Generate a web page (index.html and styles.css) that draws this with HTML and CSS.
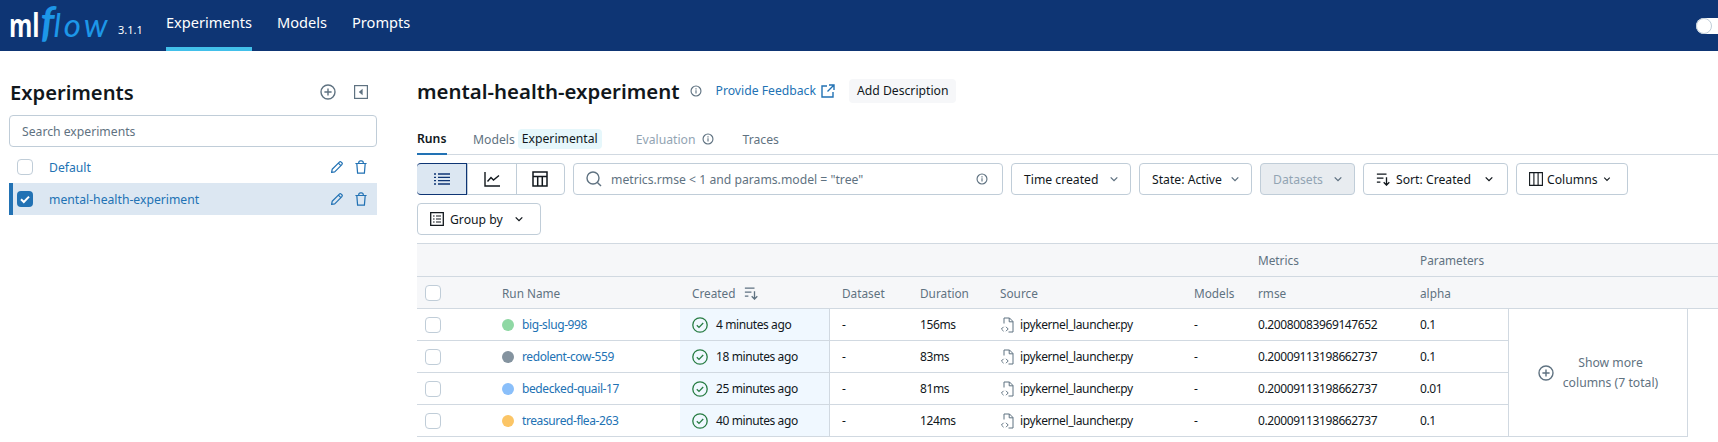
FILE: index.html
```html
<!DOCTYPE html>
<html lang="en">
<head>
    <meta charset="UTF-8">
    <meta name="viewport" content="width=device-width, initial-scale=1.0">
    <title>MLflow Experiments</title>
    <link rel="stylesheet" href="styles.css">
</head>
<body>

<svg class="defs" width="0" height="0">
    <symbol id="i-info" viewBox="0 0 16 16"><circle cx="8" cy="8" r="6.6" fill="none" stroke="currentColor" stroke-width="1.5"/><path d="M8 7v4.4M8 4.4v1.5" fill="none" stroke="currentColor" stroke-width="1.5"/></symbol>
    <symbol id="i-plus" viewBox="0 0 16 16"><circle cx="8" cy="8" r="7" fill="none" stroke="currentColor" stroke-width="1.4"/><path d="M8 4.4v7.2M4.4 8h7.2" fill="none" stroke="currentColor" stroke-width="1.4"/></symbol>
    <symbol id="i-edit" viewBox="0 0 16 16"><path d="M1.8 14.2l.7-3.6 8.2-8.2a1.5 1.5 0 0 1 2.1 0l.8.8a1.5 1.5 0 0 1 0 2.1l-8.2 8.2zM9.6 3.6l2.8 2.8" fill="none" stroke="currentColor" stroke-width="1.4" stroke-linejoin="round"/></symbol>
    <symbol id="i-trash" viewBox="0 0 16 16"><path d="M1.6 4h12.8M5.4 4V3.2A2.2 2.2 0 0 1 7.6 1h.8a2.2 2.2 0 0 1 2.2 2.2V4M3.2 4l.9 11h7.8l.9-11" fill="none" stroke="currentColor" stroke-width="1.4"/></symbol>
    <symbol id="i-chevron" viewBox="0 0 16 16"><path d="M3.6 5.8L8 10.2l4.4-4.4" fill="none" stroke="currentColor" stroke-width="1.7"/></symbol>
    <symbol id="i-sort" viewBox="0 0 16 16"><path d="M1 2.5h11M1 7h7.5M1 11.5h4M12 6v9M8.8 11.8L12 15l3.2-3.2" fill="none" stroke="currentColor" stroke-width="1.5"/></symbol>
    <symbol id="i-done" viewBox="0 0 16 16"><circle cx="8" cy="8" r="7.2" fill="none" stroke="currentColor" stroke-width="1.3"/><path d="M4.8 8.2l2.2 2.2 4.2-4.4" fill="none" stroke="currentColor" stroke-width="1.3"/></symbol>
    <symbol id="i-file" viewBox="0 0 14 16"><path d="M4 6.5V1h5.5L13 4.5V15H8.5M9.2 1v3.8H13" fill="none" stroke="currentColor" stroke-width="1"/><path d="M3.6 9.8L1.4 12l2.2 2.2M6 9.8L8.2 12 6 14.2" fill="none" stroke="currentColor" stroke-width="1"/></symbol>
</svg>

<header class="topbar">
    <div class="logo"><span class="logo-ml">ml</span><span class="logo-f">f</span><span class="logo-low">low</span></div>
    <span class="version">3.1.1</span>
    <nav class="topnav">
        <a class="topnav-item topnav-active">Experiments</a>
        <a class="topnav-item">Models</a>
        <a class="topnav-item">Prompts</a>
    </nav>
    <span class="toggle"><span class="toggle-knob"></span></span>
</header>

<div class="page">
    <aside class="sidebar">
        <div class="sidebar-head">
            <h2 class="sidebar-title">Experiments</h2>
            <svg class="icon-16 grey"><use href="#i-plus"/></svg>
            <svg class="collapse" viewBox="0 0 14 14"><rect x="0.6" y="0.6" width="12.8" height="12.8" fill="none" stroke="currentColor" stroke-width="1.2"/><path d="M8.6 3.8v6.4L4.8 7z" fill="currentColor"/></svg>
        </div>
        <div class="sidebar-search">Search experiments</div>
        <div class="exp-row">
            <span class="check"></span>
            <a class="exp-name">Default</a>
            <svg class="icon-14 blue"><use href="#i-edit"/></svg>
            <svg class="icon-14 blue"><use href="#i-trash"/></svg>
        </div>
        <div class="exp-row exp-row-active">
            <span class="check check-on"><svg viewBox="0 0 16 16"><path d="M4 8.2l2.8 2.8L12 5.6" fill="none" stroke="#fff" stroke-width="2"/></svg></span>
            <a class="exp-name">mental-health-experiment</a>
            <svg class="icon-14 blue"><use href="#i-edit"/></svg>
            <svg class="icon-14 blue"><use href="#i-trash"/></svg>
        </div>
    </aside>

    <main class="content">
        <div class="title-row">
            <h1 class="title">mental-health-experiment</h1>
            <svg class="icon-12 grey title-info"><use href="#i-info"/></svg>
            <a class="feedback">Provide Feedback</a>
            <svg class="feedback-icon" viewBox="0 0 14 14"><path d="M6 2H1v11h11V8M8 1h5v5M13 1L6.5 7.5" fill="none" stroke="currentColor" stroke-width="1.4"/></svg>
            <button class="add-desc">Add Description</button>
        </div>

        <div class="tabs">
            <span class="tab tab-active">Runs</span>
            <span class="tab tab-models">Models</span>
            <span class="tag">Experimental</span>
            <span class="tab tab-disabled">Evaluation</span>
            <svg class="icon-12 grey tab-info"><use href="#i-info"/></svg>
            <span class="tab tab-traces">Traces</span>
        </div>

        <div class="toolbar">
            <div class="segments">
                <span class="segment segment-on">
                    <svg class="icon-16 navy" viewBox="0 0 16 16"><path d="M4 3h12M4 6.3h12M4 9.6h12M4 13h12M0 3h2M0 6.3h2M0 9.6h2M0 13h2" fill="none" stroke="currentColor" stroke-width="1.3"/></svg>
                </span>
                <span class="segment">
                    <svg class="icon-16" viewBox="0 0 16 16"><path d="M1 1v14h15M3.5 10.5L7 6.5l2.5 2.5L15 4.5" fill="none" stroke="currentColor" stroke-width="1.4"/></svg>
                </span>
                <span class="segment">
                    <svg class="icon-16" viewBox="0 0 16 16"><path d="M1 1h14v14H1zM1 5.5h14M5.7 5.5V15M10.3 5.5V15" fill="none" stroke="currentColor" stroke-width="1.5"/></svg>
                </span>
            </div>
            <div class="run-search">
                <svg class="icon-16 grey" viewBox="0 0 16 16"><circle cx="7" cy="7" r="6" fill="none" stroke="currentColor" stroke-width="1.4"/><path d="M11.4 11.4L15 15" fill="none" stroke="currentColor" stroke-width="1.4"/></svg>
                <span class="run-search-text">metrics.rmse &lt; 1 and params.model = "tree"</span>
                <svg class="icon-12 grey"><use href="#i-info"/></svg>
            </div>
            <button class="btn btn-time">Time created <svg class="icon-12 grey"><use href="#i-chevron"/></svg></button>
            <button class="btn btn-state">State: Active <svg class="icon-12 grey"><use href="#i-chevron"/></svg></button>
            <button class="btn btn-datasets" disabled>Datasets <svg class="icon-12 grey"><use href="#i-chevron"/></svg></button>
            <button class="btn btn-sort"><svg class="icon-14"><use href="#i-sort"/></svg> Sort: Created <svg class="icon-12 sort-chevron"><use href="#i-chevron"/></svg></button>
            <button class="btn btn-columns"><svg class="icon-14" viewBox="0 0 14 14"><path d="M.6.6h12.8v12.8H.6zM4.9.6v12.8M9.1.6v12.8" fill="none" stroke="currentColor" stroke-width="1.1"/></svg> Columns <svg class="icon-10"><use href="#i-chevron"/></svg></button>
            <button class="btn btn-group"><svg class="icon-14" viewBox="0 0 14 14"><path d="M.7.7h12.6v12.6H.7z" fill="none" stroke="currentColor" stroke-width="1.3"/><path d="M3 4h1.6M6 4h5M3 7h1.6M6 7h5M3 10h1.6M6 10h5" fill="none" stroke="currentColor" stroke-width="1.2"/></svg> Group by <svg class="icon-12 group-chevron"><use href="#i-chevron"/></svg></button>
        </div>

        <div class="runs">
            <div class="th th-top"></div><div class="th th-top"></div><div class="th th-top"></div><div class="th th-top"></div><div class="th th-top"></div><div class="th th-top"></div><div class="th th-top"></div>
            <div class="th th-top">Metrics</div><div class="th th-top">Parameters</div><div class="th th-top"></div><div class="th th-top"></div>

            <div class="th"><span class="check"></span></div>
            <div class="th">Run Name</div>
            <div class="th">Created <svg class="icon-14 sort-mark"><use href="#i-sort"/></svg></div>
            <div class="th">Dataset</div>
            <div class="th">Duration</div>
            <div class="th">Source</div>
            <div class="th">Models</div>
            <div class="th">rmse</div>
            <div class="th">alpha</div>
            <div class="th"></div>
            <div class="th"></div>

            <div class="td"><span class="check"></span></div>
            <div class="td"><span class="dot dot-green"></span><a class="run-link">big-slug-998</a></div>
            <div class="td td-created"><svg class="icon-16 green"><use href="#i-done"/></svg>4 minutes ago</div>
            <div class="td">-</div>
            <div class="td">156ms</div>
            <div class="td"><svg class="file-icon"><use href="#i-file"/></svg>ipykernel_launcher.py</div>
            <div class="td">-</div>
            <div class="td">0.20080083969147652</div>
            <div class="td">0.1</div>
            <div class="show-more">
                <svg class="icon-16 grey"><use href="#i-plus"/></svg>
                <span class="show-more-text">Show more<br>columns (7 total)</span>
            </div>
            <div class="filler"></div>

            <div class="td"><span class="check"></span></div>
            <div class="td"><span class="dot dot-grey"></span><a class="run-link">redolent-cow-559</a></div>
            <div class="td td-created"><svg class="icon-16 green"><use href="#i-done"/></svg>18 minutes ago</div>
            <div class="td">-</div>
            <div class="td">83ms</div>
            <div class="td"><svg class="file-icon"><use href="#i-file"/></svg>ipykernel_launcher.py</div>
            <div class="td">-</div>
            <div class="td">0.20009113198662737</div>
            <div class="td">0.1</div>

            <div class="td"><span class="check"></span></div>
            <div class="td"><span class="dot dot-blue"></span><a class="run-link">bedecked-quail-17</a></div>
            <div class="td td-created"><svg class="icon-16 green"><use href="#i-done"/></svg>25 minutes ago</div>
            <div class="td">-</div>
            <div class="td">81ms</div>
            <div class="td"><svg class="file-icon"><use href="#i-file"/></svg>ipykernel_launcher.py</div>
            <div class="td">-</div>
            <div class="td">0.20009113198662737</div>
            <div class="td">0.01</div>

            <div class="td"><span class="check"></span></div>
            <div class="td"><span class="dot dot-yellow"></span><a class="run-link">treasured-flea-263</a></div>
            <div class="td td-created"><svg class="icon-16 green"><use href="#i-done"/></svg>40 minutes ago</div>
            <div class="td">-</div>
            <div class="td">124ms</div>
            <div class="td"><svg class="file-icon"><use href="#i-file"/></svg>ipykernel_launcher.py</div>
            <div class="td">-</div>
            <div class="td">0.20009113198662737</div>
            <div class="td">0.1</div>
        </div>
    </main>
</div>

</body>
</html>
```

FILE: styles.css
```css
* {
    box-sizing: border-box;
}
html, body {
    height: 442px;
    overflow: hidden;
}
body {
    margin: 0;
    font-family: "Noto Sans", Arial, sans-serif;
    font-size: 12.2px;
    color: #11171c;
    background-color: #fff;
}
h1, h2 {
    margin: 0;
}
button {
    font: inherit;
    color: inherit;
}
svg {
    flex: none;
}
.defs {
    position: absolute;
}

/* icon sizes and tints */
.icon-10 { width: 10px; height: 10px; }
.icon-12 { width: 12px; height: 12px; }
.icon-14 { width: 14px; height: 14px; }
.icon-16 { width: 16px; height: 16px; }
.grey { color: #5f7281; }
.blue { color: #2272b4; }
.navy { color: #0e3574; }
.green { color: #277c43; }

/* top bar */
.topbar {
    display: flex;
    align-items: stretch;
    height: 51px;
    padding-left: 9px;
    background-color: #0e3574;
    color: #fff;
}
.logo {
    display: flex;
    align-items: baseline;
    width: 109px;
    height: 51px;
    line-height: 42px;
    white-space: nowrap;
}
.logo-ml {
    margin-right: -11px;
    font-family: "Open Sans", sans-serif;
    font-size: 33px;
    font-weight: 700;
    transform: scaleX(0.72);
    transform-origin: left;
}
.logo-f, .logo-low {
    font-family: "Lato", sans-serif;
    font-style: italic;
    color: #1d97e8;
}
.logo-f {
    margin: 0 -8px;
    padding: 0 8px;
    font-size: 42px;
    font-weight: 700;
}
.logo-low {
    font-size: 33px;
    letter-spacing: 3px;
    margin-left: -1px;
}
.version {
    align-self: center;
    width: 48px;
    padding-top: 8px;
    font-size: 11px;
}
.topnav {
    display: flex;
    gap: 25px;
}
.topnav-item {
    display: flex;
    align-items: center;
    height: 51px;
    padding-bottom: 4px;
    border-bottom: 4px solid transparent;
    font-size: 14.6px;
}
.topnav-active {
    border-bottom-color: #42c0ea;
}
.toggle {
    align-self: center;
    display: flex;
    width: 32px;
    height: 16px;
    margin-left: auto;
    margin-right: -10px;
    border-radius: 8px;
    background-color: #fff;
}
.toggle-knob {
    width: 16px;
    height: 16px;
    border: 1px solid #c0cdd8;
    border-radius: 50%;
}

/* page columns */
.page {
    display: flex;
    height: 391px;
}
.sidebar {
    width: 417px;
    flex: none;
    padding: 0 40px 0 9px;
}
.content {
    flex: 1;
    min-width: 0;
}

/* sidebar */
.sidebar-head {
    display: flex;
    align-items: center;
    gap: 10px;
    height: 64px;
    padding: 17px 9px 0 1px;
}
.sidebar-title {
    margin-right: auto;
    font-size: 20.2px;
    font-weight: 600;
}
.collapse {
    width: 14px;
    height: 14px;
    margin-left: 8px;
    color: #5f7281;
}
.sidebar-search {
    display: flex;
    align-items: center;
    height: 32px;
    padding-left: 12px;
    border: 1px solid #c0cdd8;
    border-radius: 4px;
    color: #5f7281;
}
.exp-row {
    display: flex;
    align-items: center;
    gap: 10px;
    height: 32px;
    margin-top: 4px;
    padding: 0 9px 0 8px;
}
.exp-row-active {
    margin-top: 0;
    padding-left: 4px;
    border-left: 4px solid #2272b4;
    background-color: #dce7f2;
}
.exp-name {
    flex: 1;
    padding-left: 6px;
    color: #2272b4;
}
.check {
    display: inline-block;
    width: 16px;
    height: 16px;
    border: 1px solid #c0cdd8;
    border-radius: 4px;
    background-color: #fff;
}
.check-on {
    border: 0;
    background-color: #2272b4;
}
.check-on svg {
    display: block;
}

/* experiment title */
.title-row {
    display: flex;
    align-items: center;
    height: 64px;
    padding-top: 15px;
}
.title {
    font-size: 20.4px;
    font-weight: 600;
}
.title-info {
    margin-left: 10px;
}
.feedback {
    margin-left: 14px;
    color: #2272b4;
}
.feedback-icon {
    width: 14px;
    height: 14px;
    margin-left: 5px;
    color: #2272b4;
}
.add-desc {
    height: 24px;
    margin-left: 14px;
    padding: 0 8px;
    border: 0;
    border-radius: 4px;
    background-color: #f6f7f9;
}

/* tabs */
.tabs {
    display: flex;
    align-items: center;
    height: 40px;
    border-bottom: 1px solid #d1d9e1;
}
.tab {
    display: flex;
    align-items: center;
    height: 39px;
    padding-top: 9px;
    color: #5f7281;
}
.tab-active {
    width: 30px;
    border-bottom: 2px solid #2272b4;
    margin-bottom: -1px;
    height: 40px;
    color: #11171c;
    font-weight: 600;
}
.tab-models {
    margin-left: 26px;
}
.tag {
    margin: 9px 0 0 3px;
    padding: 0 4px;
    border-radius: 4px;
    background-color: #e6f7fb;
    color: #11171c;
    line-height: 20px;
}
.tab-disabled {
    margin-left: 34px;
    color: #92a4b3;
}
.tab-info {
    margin: 9px 0 0 6px;
}
.tab-traces {
    margin-left: 29px;
}

/* toolbar */
.toolbar {
    display: flex;
    flex-wrap: wrap;
    gap: 8px;
    margin: 8px 0;
    height: 72px;
}
.segments {
    display: flex;
    width: 148px;
    height: 32px;
    border: 1px solid #c0cdd8;
    border-radius: 4px;
}
.segment {
    display: flex;
    align-items: center;
    justify-content: center;
    flex: 1;
    border-left: 1px solid #c0cdd8;
}
.segment:first-child {
    border-left: 0;
}
.segment-on {
    flex: none;
    margin: -1px 0 -1px -1px;
    width: 50px;
    border: 1px solid #0e3574;
    border-radius: 4px 0 0 4px;
    background-color: #dce7f2;
}
.run-search {
    display: flex;
    align-items: center;
    width: 430px;
    height: 32px;
    padding: 0 14px 0 12px;
    border: 1px solid #c0cdd8;
    border-radius: 4px;
}
.run-search-text {
    flex: 1;
    padding-left: 9px;
    color: #5f7281;
}
.btn {
    display: flex;
    align-items: center;
    gap: 6px;
    height: 32px;
    padding: 0 12px;
    border: 1px solid #c0cdd8;
    border-radius: 4px;
    background-color: #fff;
    white-space: nowrap;
}
.btn-time, .btn-state, .btn-datasets {
    justify-content: space-between;
    padding-right: 10px;
}
.btn-time { width: 120px; }
.btn-state { width: 113px; }
.btn-datasets {
    width: 95px;
    background-color: #e8ecf0;
    color: #92a4b3;
}
.btn-sort { width: 145px; }
.btn-columns { width: 112px; gap: 4px; }
.btn-group { width: 124px; }
.sort-chevron {
    margin-left: auto;
}
.group-chevron {
    margin-left: 4px;
}

/* runs table */
.runs {
    display: grid;
    grid-template-columns: 73px 190px 150px 78px 80px 194px 64px 162px 100px 180px 30px;
    grid-template-rows: 34px 32px repeat(4, 32px);
    font-size: 12px;
    letter-spacing: -0.4px;
}
.th, .td {
    display: flex;
    align-items: center;
    padding-left: 12px;
    border-bottom: 1px solid #d1d9e1;
    white-space: nowrap;
}
.th {
    background-color: #f6f7f9;
    color: #5f7281;
    font-size: 11.8px;
    letter-spacing: 0;
}
.th-top {
    border-top: 1px solid #d1d9e1;
}
.th:nth-child(11n + 1), .td:has(> .check) {
    padding-left: 8px;
}
.sort-mark {
    margin-left: 8px;
    color: #5f7281;
}
.td-created {
    gap: 8px;
    border-right: 1px solid #d1d9e1;
    background-color: #f0f8ff;
}
.dot {
    width: 12px;
    height: 12px;
    margin-right: 8px;
    border-radius: 50%;
}
.dot-green { background-color: #8fd8a4; }
.dot-grey { background-color: #84939f; }
.dot-blue { background-color: #8abffa; }
.dot-yellow { background-color: #fbc566; }
.run-link {
    color: #2272b4;
}
.file-icon {
    width: 14px;
    height: 16px;
    margin-right: 6px;
    color: #5f7281;
}
.show-more {
    grid-column: 10;
    grid-row: 3 / 7;
    display: flex;
    align-items: center;
    justify-content: center;
    gap: 9px;
    border-left: 1px solid #d1d9e1;
    border-right: 1px solid #d1d9e1;
    border-bottom: 1px solid #d1d9e1;
    color: #5f7281;
    font-size: 12.2px;
    letter-spacing: 0;
    line-height: 20px;
}
.show-more-text {
    text-align: center;
}
.filler {
    grid-column: 11;
    grid-row: 3 / 7;
}
```
